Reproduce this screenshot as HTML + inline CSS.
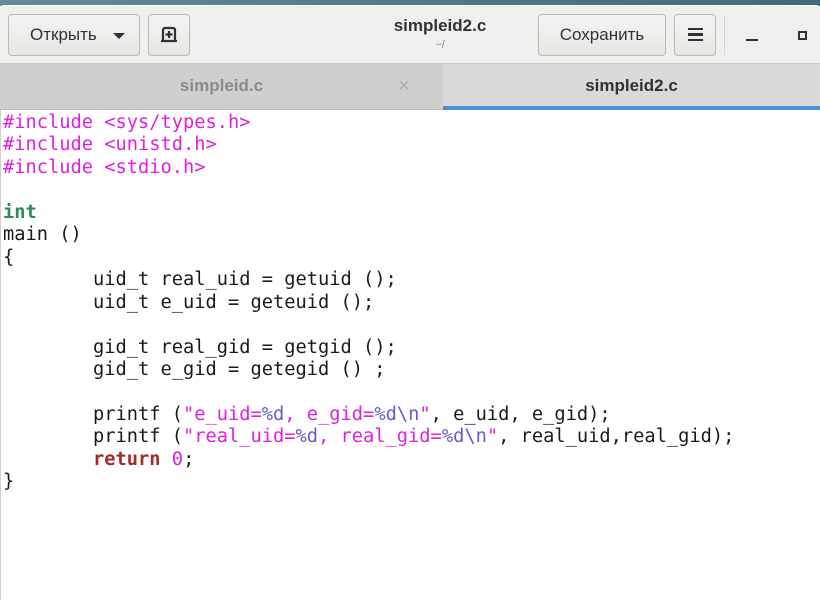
<!DOCTYPE html>
<html><head><meta charset="utf-8"><style>
*{margin:0;padding:0;box-sizing:border-box}
body{width:820px;height:600px;overflow:hidden;background:#fff;font-family:"Liberation Sans","DejaVu Sans",sans-serif;position:relative}
.top{position:absolute;left:0;top:0;width:820px;height:6px;background:linear-gradient(90deg,#5f8e95,#3e6c78)}
.hdr{position:absolute;left:0;top:5px;width:820px;height:59px;background:#efefed;border-top:1px solid #fff;border-radius:4px 4px 0 0;border-bottom:1px solid #c8c8c5}
.btn{position:absolute;top:8px;height:42px;border:1px solid #b9b9b5;border-radius:4px;background:linear-gradient(#f4f4f2,#e6e6e3);color:#2e3436;font-size:17px;line-height:40px;text-align:center}
.tabs{position:absolute;left:0;top:64px;width:820px;height:46px;background:#cfcfcd;border-bottom:1px solid #bdbdba}
.tab{position:absolute;top:0;height:46px;line-height:44px;text-align:center;font-size:17px;font-weight:bold}
pre{position:absolute;left:3px;top:112px;font-family:"DejaVu Sans Mono",monospace;font-size:18.7px;line-height:22.45px;color:#1a1a1a}
.p{color:#e020e0}.s{color:#e020e0}.e{color:#6a5acd}.t{color:#2e8b57;font-weight:bold}.k{color:#a52a2a;font-weight:bold}
.edge{position:absolute;left:0;top:110px;width:1px;height:490px;background:#d0d0d0}
</style></head><body>
<div class="top"></div>
<div class="hdr">
 <div class="btn" style="left:8px;width:132px;text-align:left;padding-left:21px">Открыть <span style="position:absolute;left:104px;top:18px;border-left:6px solid transparent;border-right:6px solid transparent;border-top:6px solid #2e3436;width:0;height:0"></span></div>
 <div class="btn" style="left:148px;width:42px"><svg width="20" height="20" viewBox="0 0 20 20" style="margin-top:10px"><path d="M4 16V5a2 2 0 0 1 2-2h8a2 2 0 0 1 2 2v11M2 16h16M10 6v7M6.5 9.5h7" stroke="#2e3436" stroke-width="2.2" fill="none"/></svg></div>
 <div style="position:absolute;left:340px;width:200px;top:10px;text-align:center;font-weight:bold;font-size:17px;color:#2e3436">simpleid2.c</div>
 <div style="position:absolute;left:340px;width:200px;top:33px;text-align:center;font-size:11px;color:#888">~/</div>
 <div class="btn" style="left:538px;width:128px">Сохранить</div>
 <div class="btn" style="left:674px;width:42px"><div style="position:absolute;left:13px;top:13px;width:15px;height:13px;border-top:2.5px solid #2e3436;border-bottom:2.5px solid #2e3436"></div><div style="position:absolute;left:13px;top:18px;width:15px;height:2.5px;background:#2e3436"></div></div>
 <div style="position:absolute;left:724px;top:9px;width:1px;height:40px;background:#d5d5d2"></div>
 <div style="position:absolute;left:746px;top:33px;width:12px;height:2px;background:#2e3436"></div>
 <div style="position:absolute;left:798px;top:25px;width:9px;height:9px;border:2px solid #2e3436"></div>
</div>
<div class="tabs">
 <div class="tab" style="left:0;width:443px;color:#8b8b89">simpleid.c<span style="position:absolute;left:398px;top:0;font-weight:normal;font-size:20px;color:#b0b0ae">×</span></div>
 <div class="tab" style="left:443px;width:377px;background:#dadad8;color:#2e3436;border-bottom:4px solid #4a90d9">simpleid2.c</div>
</div>
<div class="edge"></div>
<pre><span class="p">#include &lt;sys/types.h&gt;</span>
<span class="p">#include &lt;unistd.h&gt;</span>
<span class="p">#include &lt;stdio.h&gt;</span>

<span class="t">int</span>
main ()
{
        uid_t real_uid = getuid ();
        uid_t e_uid = geteuid ();

        gid_t real_gid = getgid ();
        gid_t e_gid = getegid () ;

        printf (<span class="s">"e_uid=<span class="e">%d</span>, e_gid=<span class="e">%d\n</span>"</span>, e_uid, e_gid);
        printf (<span class="s">"real_uid=<span class="e">%d</span>, real_gid=<span class="e">%d\n</span>"</span>, real_uid,real_gid);
        <span class="k">return</span> <span class="s">0</span>;
}</pre>
</body></html>
